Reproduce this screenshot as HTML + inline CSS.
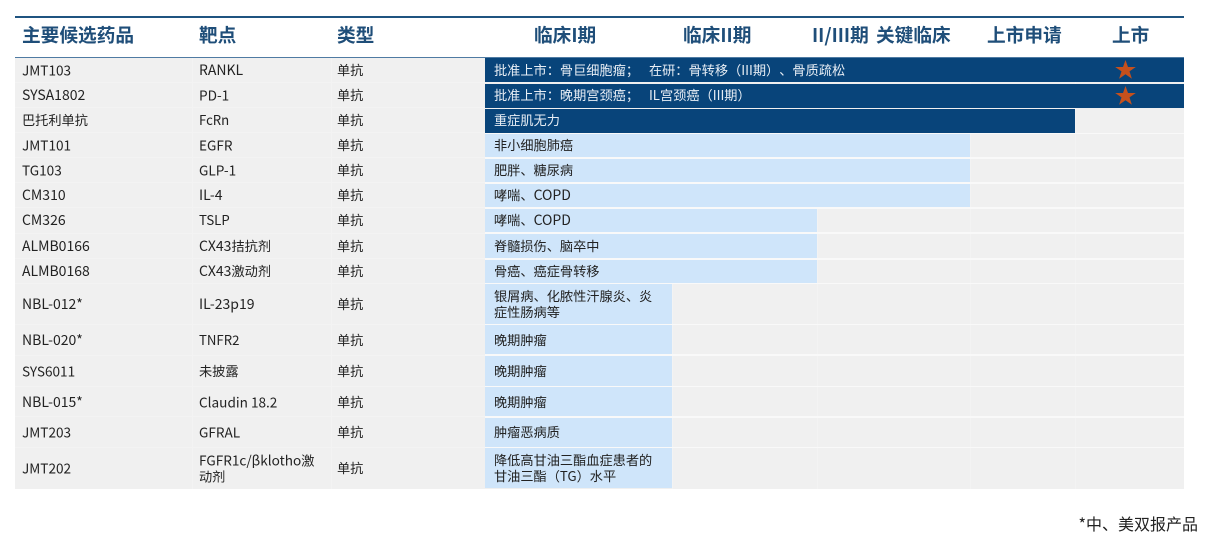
<!DOCTYPE html>
<html><head><meta charset="utf-8"><style>
html,body{margin:0;padding:0;background:#fff}
#p{position:relative;width:1212px;height:539px;overflow:hidden;background:#fff;font-family:"Noto Sans CJK SC","Liberation Sans",sans-serif;font-size:13.2px;color:#222;text-spacing-trim:space-all}
#p div{position:absolute}
.t{white-space:nowrap;line-height:16px;transform:translateY(-50%)}
.t a{font-size:14px}
.t b{font-size:13.6px;font-weight:400}
.h{white-space:nowrap;font-size:18.7px;font-weight:700;color:#1f4e79;line-height:24px;top:23px}
.d{background:#08447a}
.l{background:#cfe5fa}
.c{width:1px;top:58px;height:431px;background:#f3f3f3}
.r{left:15px;width:470px;height:1px;background:#f3f3f3}
.g{left:485px;width:699px;background:#f9f9f9}
</style></head><body><div id="p">
<div style="left:15px;top:16px;width:1169px;height:2px;background:#1f5480"></div>
<div style="left:15px;top:56.5px;width:1169px;height:2px;background:#4f7ba3"></div>
<div style="left:15px;top:58px;width:1169px;height:431px;background:#f0f0f0"></div>
<div class="c" style="left:192px"></div><div class="c" style="left:331px"></div><div class="c" style="left:1075px"></div><div class="c" style="left:970px"></div><div class="c" style="left:817px"></div><div class="c" style="left:672px"></div>
<div class="r" style="top:82px"></div><div class="r" style="top:107px"></div><div class="r" style="top:132px"></div><div class="r" style="top:157px"></div><div class="r" style="top:182px"></div><div class="r" style="top:207px"></div><div class="r" style="top:233px"></div><div class="r" style="top:258px"></div><div class="r" style="top:283px"></div><div class="r" style="top:324px"></div><div class="r" style="top:355px"></div><div class="r" style="top:386px"></div><div class="r" style="top:416px"></div><div class="r" style="top:447px"></div>

<div class="g" style="top:132.5px;height:1.5px"></div>
<div class="g" style="top:157px;height:2px"></div>
<div class="g" style="top:182px;height:2px"></div>
<div class="g" style="top:207px;height:2px"></div>
<div class="g" style="top:232px;height:2px"></div>
<div class="g" style="top:257.5px;height:2px"></div>
<div class="g" style="top:282.7px;height:1.6px"></div>
<div class="g" style="top:324px;height:1.4px"></div>
<div class="g" style="top:354.3px;height:1.5px"></div>
<div class="g" style="top:386px;height:1.2px"></div>
<div class="g" style="top:416.3px;height:1.7px"></div>
<div class="g" style="top:447px;height:1.4px"></div>

<div class="h" style="left:22px">主要候选药品</div>
<div class="h" style="left:199px">靶点</div>
<div class="h" style="left:337px">类型</div>
<div class="h" style="left:534px">临床I期</div>
<div class="h" style="left:683px">临床II期</div>
<div class="h" style="left:812px">II/III期</div>
<div class="h" style="left:876px">关键临床</div>
<div class="h" style="left:987px">上市申请</div>
<div class="h" style="left:1112px">上市</div>

<div class="d" style="left:485px;top:58px;width:699px;height:24px"></div>
<div class="d" style="left:485px;top:83.5px;width:699px;height:24px"></div>
<div class="d" style="left:485px;top:108.5px;width:590px;height:24px"></div>
<div class="l" style="left:485px;top:134px;width:485px;height:23px"></div>
<div class="l" style="left:485px;top:159px;width:485px;height:23px"></div>
<div class="l" style="left:485px;top:184px;width:485px;height:23px"></div>
<div class="l" style="left:485px;top:209px;width:332px;height:23px"></div>
<div class="l" style="left:485px;top:234px;width:332px;height:23.5px"></div>
<div class="l" style="left:485px;top:259.5px;width:332px;height:23.2px"></div>
<div class="l" style="left:485px;top:284.3px;width:187px;height:39.7px"></div>
<div class="l" style="left:485px;top:325.4px;width:187px;height:28.9px"></div>
<div class="l" style="left:485px;top:355.8px;width:187px;height:30.2px"></div>
<div class="l" style="left:485px;top:387.2px;width:187px;height:29.1px"></div>
<div class="l" style="left:485px;top:418px;width:187px;height:29px"></div>
<div class="l" style="left:485px;top:448.4px;width:187px;height:39.6px"></div>

<svg style="position:absolute;left:1115px;top:60px" width="21" height="19" viewBox="0 0 21 19"><polygon points="10.5,0 13,7 20.8,7 14.5,11.4 16.9,18.8 10.5,14.2 4.1,18.8 6.5,11.4 0.2,7 8,7" fill="#c5501c"/></svg>
<svg style="position:absolute;left:1115px;top:86px" width="21" height="19" viewBox="0 0 21 19"><polygon points="10.5,0 13,7 20.8,7 14.5,11.4 16.9,18.8 10.5,14.2 4.1,18.8 6.5,11.4 0.2,7 8,7" fill="#c5501c"/></svg>

<div class="t" style="left:22px;top:70px"><b>JMT103</b></div><div class="t" style="left:199px;top:70px"><a>RANKL</a></div><div class="t" style="left:337px;top:70px">单抗</div>
<div class="t" style="left:22px;top:95px"><a>SYSA1802</a></div><div class="t" style="left:199px;top:95px"><b>PD-1</b></div><div class="t" style="left:337px;top:95px">单抗</div>
<div class="t" style="left:22px;top:120px">巴托利单抗</div><div class="t" style="left:199px;top:120px">FcRn</div><div class="t" style="left:337px;top:120px">单抗</div>
<div class="t" style="left:22px;top:145px"><b>JMT101</b></div><div class="t" style="left:199px;top:145px"><b>EGFR</b></div><div class="t" style="left:337px;top:145px">单抗</div>
<div class="t" style="left:22px;top:170px"><b>TG103</b></div><div class="t" style="left:199px;top:170px"><b>GLP-1</b></div><div class="t" style="left:337px;top:170px">单抗</div>
<div class="t" style="left:22px;top:195px"><a>CM310</a></div><div class="t" style="left:199px;top:195px"><a>IL-4</a></div><div class="t" style="left:337px;top:195px">单抗</div>
<div class="t" style="left:22px;top:220px"><a>CM326</a></div><div class="t" style="left:199px;top:220px">TSLP</div><div class="t" style="left:337px;top:220px">单抗</div>
<div class="t" style="left:22px;top:245.5px"><a>ALMB0166</a></div><div class="t" style="left:199px;top:245.5px"><a>CX43</a>拮抗剂</div><div class="t" style="left:337px;top:245.5px">单抗</div>
<div class="t" style="left:22px;top:270.5px"><a>ALMB0168</a></div><div class="t" style="left:199px;top:270.5px"><a>CX43</a>激动剂</div><div class="t" style="left:337px;top:270.5px">单抗</div>
<div class="t" style="left:22px;top:304px"><a>NBL-012*</a></div><div class="t" style="left:199px;top:304px"><a>IL-23p19</a></div><div class="t" style="left:337px;top:304px">单抗</div>
<div class="t" style="left:22px;top:340px"><a>NBL-020*</a></div><div class="t" style="left:199px;top:340px">TNFR2</div><div class="t" style="left:337px;top:340px">单抗</div>
<div class="t" style="left:22px;top:371px"><b>SYS6011</b></div><div class="t" style="left:199px;top:371px">未披露</div><div class="t" style="left:337px;top:371px">单抗</div>
<div class="t" style="left:22px;top:402px"><a>NBL-015*</a></div><div class="t" style="left:199px;top:402px"><b>Claudin 18.2</b></div><div class="t" style="left:337px;top:402px">单抗</div>
<div class="t" style="left:22px;top:432px"><b>JMT203</b></div><div class="t" style="left:199px;top:432px"><b>GFRAL</b></div><div class="t" style="left:337px;top:432px">单抗</div>
<div class="t" style="left:22px;top:468px"><b>JMT202</b></div><div class="t" style="left:199px;top:468px"><b>FGFR1c/βklotho</b>激<br>动剂</div><div class="t" style="left:337px;top:468px">单抗</div>

<div class="t" style="left:494px;top:70px;color:#e8eef5">批准上市：骨巨细胞瘤；&nbsp;&nbsp;&nbsp;<span style="margin-left:1px">在研：骨转移（III期）、骨质疏松</span></div>
<div class="t" style="left:494px;top:95px;color:#e8eef5">批准上市：晚期宫颈癌；&nbsp;&nbsp;&nbsp;<span style="margin-left:1px">IL宫颈癌（III期）</span></div>
<div class="t" style="left:494px;top:120px;color:#e8eef5">重症肌无力</div>
<div class="t" style="left:494px;top:145px">非小细胞肺癌</div>
<div class="t" style="left:494px;top:170px">肥胖、糖尿病</div>
<div class="t" style="left:494px;top:195px">哮喘、<a>COPD</a></div>
<div class="t" style="left:494px;top:220px">哮喘、<a>COPD</a></div>
<div class="t" style="left:494px;top:245.5px">脊髓损伤、脑卒中</div>
<div class="t" style="left:494px;top:270.5px">骨癌、癌症骨转移</div>
<div class="t" style="left:494px;top:304px">银屑病、化脓性汗腺炎、炎<br>症性肠病等</div>
<div class="t" style="left:494px;top:340px">晚期肿瘤</div>
<div class="t" style="left:494px;top:371px">晚期肿瘤</div>
<div class="t" style="left:494px;top:402px">晚期肿瘤</div>
<div class="t" style="left:494px;top:432px">肿瘤恶病质</div>
<div class="t" style="left:494px;top:468px">降低高甘油三酯血症患者的<br>甘油三酯（TG）水平</div>

<div class="t" style="right:14px;top:523px;font-size:16px;color:#222">*中、美双报产品</div>
</div></body></html>
